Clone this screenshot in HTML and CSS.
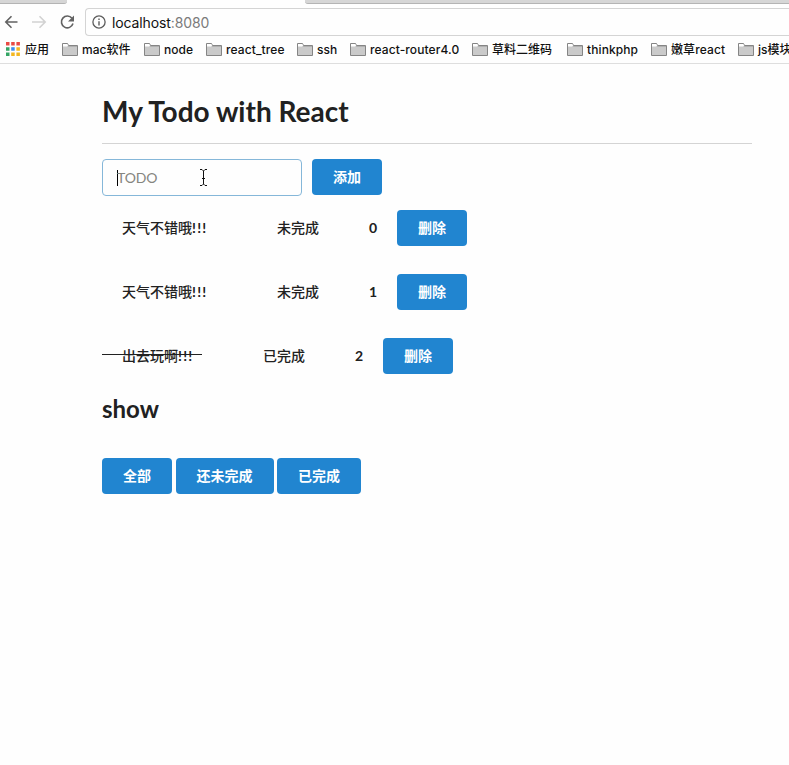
FILE: index.html
```html
<!DOCTYPE html>
<html lang="zh-CN">
<head>
<meta charset="utf-8">
<title>My Todo with React</title>
<link rel="stylesheet" href="styles.css">
</head>
<body>
<svg class="defs" width="0" height="0">
  <symbol id="folder" viewBox="0 0 16 13">
    <path d="M.5 12.5V.5H5.500L6.500 2.500H15.500V12.500Z" fill="#cacaca" stroke="#858585"/>
    <path d="M1 1H5.200L6 2.500 5.300 3.500H1Z" fill="#fff"/>
    <path d="M6.500 3H15V4H5.500Z" fill="#b0b0b0"/>
  </symbol>
</svg>
<header class="browser">
  <div class="tabs"><div class="tab-left"></div><div class="tab-right"></div></div>
  <div class="toolbar">
    <svg class="nav" width="78" height="28" viewBox="0 0 78 28" fill="none" stroke-width="1.6">
      <path d="M17.500 14H6M11.500 8.300L5.800 14l5.700 5.700" stroke="#626262"/>
      <path d="M32 14h12.500M39.500 8.300l5.700 5.700-5.700 5.700" stroke="#d2d2d2"/>
      <path d="M72 10.300A5.900 5.900 0 1 0 73 15.600" stroke="#626262"/>
      <path d="M74 7.500v6h-6z" fill="#626262"/>
    </svg>
    <div class="address">
      <svg width="14" height="14" viewBox="0 0 14 14"><circle cx="7" cy="7" r="6.100" fill="none" stroke="#5c5c5c" stroke-width="1.300"/><path d="M6.300 3.500h1.400v1.400H6.300zM6.300 6.200h1.400v4.300H6.300z" fill="#5c5c5c"/></svg>
      <span class="url">localhost<span class="port">:8080</span></span>
    </div>
  </div>
  <nav class="bookmarks">
    <a class="mark"><svg class="apps" width="14" height="14" viewBox="0 0 14 14">
      <path d="M0 0h3.500v3.500H0zM5.200 0h3.500v3.500H5.200zM10.400 0h3.500v3.500h-3.500z" fill="#e94a44"/>
      <path d="M0 5.200h3.500v3.500H0zM0 10.400h3.500v3.500H0z" fill="#35a565"/><path d="M5.200 5.200h3.500v3.500H5.200z" fill="#3c8bef"/>
      <path d="M5.200 10.400h3.500v3.500H5.200zM10.400 5.200h3.500v3.500h-3.500zM10.400 10.400h3.500v3.500h-3.500z" fill="#f3b61f"/></svg>应用</a>
    <a class="mark"><svg class="folder"><use href="#folder"/></svg>mac软件</a>
    <a class="mark"><svg class="folder"><use href="#folder"/></svg>node</a>
    <a class="mark"><svg class="folder"><use href="#folder"/></svg><span class="wide">react_tree</span></a>
    <a class="mark"><svg class="folder"><use href="#folder"/></svg>ssh</a>
    <a class="mark"><svg class="folder"><use href="#folder"/></svg><span class="wide">react-router4.0</span></a>
    <a class="mark"><svg class="folder"><use href="#folder"/></svg>草料二维码</a>
    <a class="mark"><svg class="folder"><use href="#folder"/></svg><span class="wide">thinkphp</span></a>
    <a class="mark"><svg class="folder"><use href="#folder"/></svg><span class="wide">嫩草react</span></a>
    <a class="mark"><svg class="folder"><use href="#folder"/></svg>js模块</a>
  </nav>
</header>
<main class="app">
  <h1>My Todo with React</h1>
  <form class="add">
    <div class="field"><span class="caret"></span><span class="placeholder">TODO</span>
      <svg class="ibeam" width="9" height="17" viewBox="0 0 9 17" fill="none" stroke="#111"><path d="M1 .5h2l1.500 1.500L6 .5h2M1 16.500h2L4.500 15 6 16.500h2M4.500 2v13M3 9.500h3"/></svg>
    </div>
    <button type="button">添加</button>
  </form>
  <ul class="list">
    <li><span class="task">天气不错哦<span class="marks">!!!</span></span><span class="state">未完成</span><span class="index">0</span><button>删除</button></li>
    <li><span class="task">天气不错哦<span class="marks">!!!</span></span><span class="state">未完成</span><span class="index">1</span><button>删除</button></li>
    <li class="done"><span class="task">出去玩啊<span class="marks">!!!</span></span><span class="state">已完成</span><span class="index">2</span><button>删除</button></li>
  </ul>
  <h2>show</h2>
  <div class="filters"><button>全部</button><button>还未完成</button><button>已完成</button></div>
</main>
</body>
</html>
```
FILE: styles.css
```css
* { box-sizing: border-box; }
body { margin: 0; background: #fefefe; color: #212121; font: 14px/20px Lato, "Noto Sans CJK SC", sans-serif; overflow: hidden; }
.defs { position: absolute; }
.browser { height: 64px; border-bottom: 1px solid #dedede; font-family: Inter, "Noto Sans CJK SC", sans-serif; color: #111; overflow: hidden; }
.tabs { display: flex; justify-content: space-between; height: 4px; }
.tab-left, .tab-right { background: #d6d6d6; border-bottom: 1px solid #b4b4b4; }
.tab-left { width: 67px; border-bottom-right-radius: 3px; }
.tab-right { width: 484px; border-bottom-left-radius: 3px; }
.toolbar { display: flex; height: 32px; padding-top: 4px; }
.nav { flex: none; width: 78px; margin-right: 7px; }
.address { flex: 1; display: flex; align-items: center; gap: 6px; height: 28px; padding-left: 6px; border: 1px solid #d4d4d4; border-right: 0; border-radius: 4px 0 0 4px; }
.url { padding-top: 2px; font-size: 14px; letter-spacing: -.12px; }
.port { color: #7b7b7b; }
.bookmarks { display: grid; grid-template-columns: 56px 82px 62px 91px 53px 122px 95px 84px 87px 80px; padding-left: 6px; height: 27px; align-items: center; font-size: 12px; font-weight: 500; }
.mark { display: flex; align-items: center; white-space: nowrap; }
.wide { letter-spacing: .1px; }
.apps { margin-right: 5px; margin-top: -1px; }
.folder { width: 16px; height: 13px; margin-right: 4px; margin-top: -1px; flex: none; }
.app { width: 650px; margin-left: 102px; }
h1 { margin: 0; height: 80px; padding-top: 29px; border-bottom: 1px solid #d4d4d4; font-size: 28px; line-height: 36px; font-weight: 700; }
.add { display: flex; gap: 10px; margin: 15px 0 14px; height: 37px; }
.field { display: flex; align-items: center; width: 200px; height: 37px; padding-left: 14px; border: 1px solid #85b7d9; border-radius: 4px; color: #85857f; }
.caret { width: 1px; height: 16px; background: #000; }
.placeholder { width: 82px; margin-left: -1px; letter-spacing: -.1px; }
.ibeam { margin-top: -1px; }
button { height: 36px; padding: 0 21px; border: 0; border-radius: 4px; background: #2185d0; color: #fff; font: 700 14px/20px Lato, "Noto Sans CJK SC", sans-serif; white-space: nowrap; }
.list { margin: 0; padding: 0; list-style: none; font-weight: 700; }
.list li { display: flex; align-items: center; height: 36px; margin-bottom: 28px; }
.task, .state { font-weight: 500; }
.task { width: 155px; margin-left: 20px; }
.marks { font-weight: 700; letter-spacing: 1.2px; }
.state { width: 92px; }
.index { width: 28px; }
.done { position: relative; }
.done .task { width: 141px; }
.done::before { content: ""; position: absolute; left: 0; top: 16px; width: 100px; height: 1px; background: #212121; }
h2 { margin: -8px 0 0; font-size: 24px; line-height: 30px; font-weight: 700; }
.filters { display: flex; gap: 3.5px; margin-top: 34px; }
```
